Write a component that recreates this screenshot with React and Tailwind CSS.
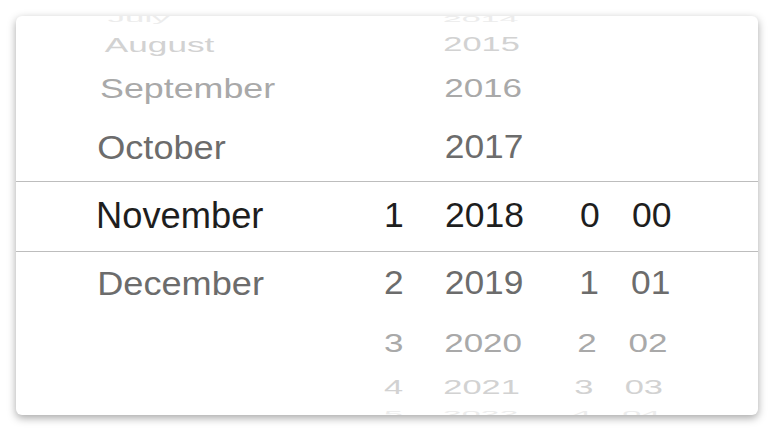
import React from "react";

const rows = [
  { cells: ["July", "", "2014", "", ""], cls: "h-[12px] text-[#ececec] [transform:translateY(-3px)_scale(0.96,0.28)]" },
  { cells: ["August", "", "2015", "", ""], cls: "h-[35px] text-[#d2d2d2] [transform:scale(0.97,0.56)]" },
  { cells: ["September", "", "2016", "", ""], cls: "h-[53px] text-[#a9a9a9] [transform:scale(0.986,0.75)]" },
  { cells: ["October", "", "2017", "", ""], cls: "h-[65px] text-[#6c6c6c] [transform:scale(0.996,0.92)]" },
  { cells: ["November", "1", "2018", "0", "00"], cls: "h-[71px] text-[#1e1e1e] border-y border-[#bdbdbd]" },
  { cells: ["December", "2", "2019", "1", "01"], cls: "h-[65px] text-[#6c6c6c] [transform:scale(0.996,0.92)]" },
  { cells: ["", "3", "2020", "2", "02"], cls: "h-[53px] text-[#a9a9a9] [transform:scale(0.986,0.75)]" },
  { cells: ["", "4", "2021", "3", "03"], cls: "h-[35px] text-[#d2d2d2] [transform:scale(0.97,0.56)]" },
  { cells: ["", "5", "2022", "4", "04"], cls: "h-[12px] text-[#ececec] [transform:translateY(3px)_scale(0.96,0.28)]" },
];

function Row({ cells, cls }) {
  return (
    <div className={"flex shrink-0 items-center " + cls}>
      <div className="grid w-full grid-cols-[290px_61px_135px_52px_1fr] pl-[78px] text-[35.5px] leading-none">
        {cells.map((c, i) => (
          <span
            key={i}
            className={i === 0 ? "whitespace-nowrap pl-[2px] text-[36.3px]" : "whitespace-nowrap"}
          >
            {c}
          </span>
        ))}
      </div>
    </div>
  );
}

export default function App() {
  return (
    <div className="h-[434px] w-[784px] bg-white pl-4 pt-4 font-['Liberation_Sans',Arial,sans-serif]">
      <div className="flex h-[399px] w-[742px] flex-col overflow-hidden rounded-md bg-white shadow-[0_3px_8px_rgba(0,0,0,0.35)]">
        {rows.map((r, i) => (
          <Row key={i} cells={r.cells} cls={r.cls} />
        ))}
      </div>
    </div>
  );
}
